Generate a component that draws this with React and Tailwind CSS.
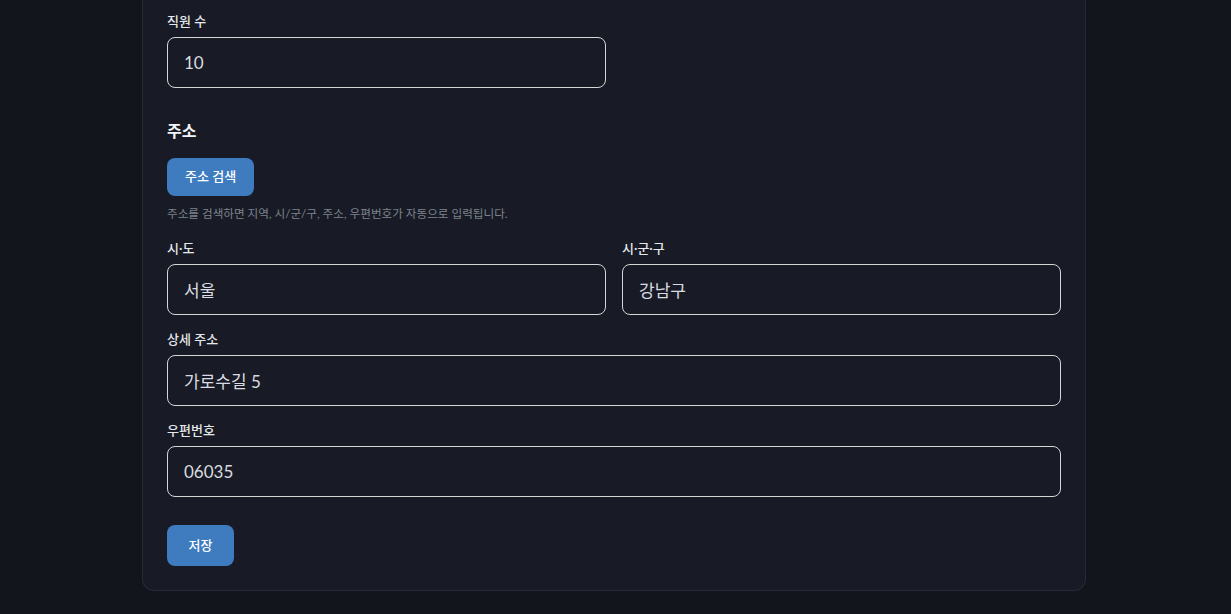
import { useState } from 'react'

const font = { fontFamily: '"Lato", "Noto Sans CJK KR", sans-serif' }

const Field = ({ label, value, onChange, className = '' }) => (
  <div className={className}>
    <label className="block text-[13px] leading-5 font-medium text-gray-200 mb-1.5">{label}</label>
    <input
      type="text"
      value={value}
      onChange={(e) => onChange(e.target.value)}
      className="w-full h-[51px] px-4 rounded-lg border border-[#d6d6d6] bg-[#181b25] text-[17px] text-[#d9dbe0] outline-none"
    />
  </div>
)

const App = () => {
  const [form, setForm] = useState({
    employees: '10',
    sido: '서울',
    sigungu: '강남구',
    detail: '가로수길 5',
    zipcode: '06035',
  })

  const update = (key) => (val) => setForm((prev) => ({ ...prev, [key]: val }))

  return (
    <div className="min-h-screen bg-[#12151c] pb-6" style={font}>
      <div className="ml-[142px] w-[944px] bg-[#181b25] border-x border-b border-[#272b36] rounded-b-xl px-6 pt-[11px] pb-6">
        {/* Employees */}
        <div className="grid grid-cols-2 gap-4">
          <Field label="직원 수" value={form.employees} onChange={update('employees')} />
        </div>

        {/* Address */}
        <h3 className="mt-8 mb-4 text-base leading-[22px] font-semibold text-gray-100">주소</h3>
        <button className="h-[38px] px-[18px] rounded-lg bg-[#3e7bbf] text-[13px] font-medium text-white">
          주소 검색
        </button>
        <p className="mt-2.5 text-[11.6px] leading-4 text-[#7e838f]">
          주소를 검색하면 지역, 시/군/구, 주소, 우편번호가 자동으로 입력됩니다.
        </p>

        <div className="grid grid-cols-2 gap-4 mt-4">
          <Field label="시·도" value={form.sido} onChange={update('sido')} />
          <Field label="시·군·구" value={form.sigungu} onChange={update('sigungu')} />
        </div>
        <Field className="mt-[14px]" label="상세 주소" value={form.detail} onChange={update('detail')} />
        <Field className="mt-[14px]" label="우편번호" value={form.zipcode} onChange={update('zipcode')} />

        <button className="mt-7 h-[41px] w-[67px] rounded-lg bg-[#3e7bbf] text-[13px] font-medium text-white">
          저장
        </button>
      </div>
    </div>
  )
}

export default App
